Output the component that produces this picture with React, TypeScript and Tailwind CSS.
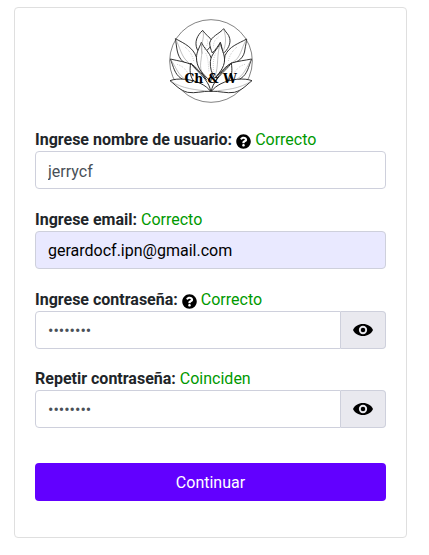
import { useState } from "react";
import type { ReactNode } from "react";
import { FaQuestionCircle } from "react-icons/fa";

const LEAVES = [
  "M125 60 C108 76 100 94 108 116 C114 126 120 132 124 134 C132 124 154 110 154 92 C146 80 134 74 125 60Z",
  "M188 55 C176 70 150 78 146 98 C146 108 150 118 154 128 C164 118 172 106 178 96 C182 106 184 116 184 132 C202 118 210 98 206 84 C204 72 194 66 188 55Z",
  "M43 85 C48 110 46 136 66 154 C74 160 82 162 90 160 C100 166 124 190 136 208 C126 192 110 170 106 140 C96 112 72 100 43 85Z",
  "M257 86 C232 100 204 108 192 136 C190 160 178 184 164 202 C180 184 196 166 212 158 C232 156 250 142 252 116 C254 104 256 96 257 86Z",
  "M121 96 C114 116 104 128 107 150 C110 176 124 188 149 214 C154 190 160 166 152 146 C146 126 130 116 121 96Z",
  "M178 97 C170 118 150 130 148 154 C147 176 152 184 160 204 C180 184 194 164 190 140 C188 124 180 114 178 97Z",
  "M28 146 C38 170 40 190 60 204 C84 222 116 226 148 243 C138 212 112 184 94 164 C74 154 52 152 28 146Z",
  "M272 146 C262 170 260 190 240 204 C216 222 184 226 152 243 C160 212 184 176 212 158 C232 152 252 150 272 146Z",
  "M89 158 C86 180 86 196 98 212 C112 228 132 232 149 243 C146 218 122 194 108 180 C100 172 94 166 89 158Z",
  "M211 158 C214 180 214 196 202 212 C188 228 168 232 151 243 C154 218 178 194 192 180 C200 172 206 166 211 158Z",
  "M27 211 C50 202 92 206 120 220 C132 226 142 234 149 243 C122 242 104 250 80 246 C56 240 44 224 27 211Z",
  "M273 211 C250 202 208 206 180 220 C168 226 158 234 151 243 C178 242 196 250 220 246 C244 240 256 224 273 211Z",
];

const VEINS = [
  "M125 62 C134 84 114 104 124 130",
  "M188 57 C196 80 196 104 184 128",
  "M121 98 C128 136 112 160 122 184",
  "M178 99 C166 134 174 166 162 198",
  "M44 87 C58 112 60 140 84 158",
  "M256 88 C240 114 240 144 214 156",
  "M29 147 C48 176 50 192 74 208",
  "M271 147 C254 176 250 192 226 208",
  "M29 212 C64 236 104 238 146 243",
  "M271 212 C236 236 196 238 154 243",
];

const SHADING = [
  "M138 88 C144 98 136 108 130 118",
  "M172 80 C162 88 156 98 158 112",
  "M72 110 C86 122 94 134 98 152",
  "M228 110 C214 122 206 134 202 152",
  "M134 128 C142 144 142 164 144 186",
  "M164 130 C156 144 156 164 158 184",
  "M48 162 C62 166 72 174 82 190",
  "M252 162 C238 166 228 174 218 190",
];

function Logo() {
  return (
    <svg viewBox="24 26 252 252" className="size-21" role="img" aria-label="Ch & W">
      <circle cx="150" cy="152" r="124" fill="none" stroke="#444" strokeWidth="2" />
      <g fill="#fff" stroke="#222" strokeWidth="2.8" strokeLinejoin="round">
        {LEAVES.map((d) => (
          <path key={d} d={d} />
        ))}
      </g>
      <g fill="none" stroke="#888" strokeWidth="1.6">
        {VEINS.map((d) => (
          <path key={d} d={d} />
        ))}
      </g>
      <g fill="none" stroke="#bbb" strokeWidth="3" strokeDasharray="2 4">
        {SHADING.map((d) => (
          <path key={d} d={d} />
        ))}
      </g>
      <text
        x="149"
        y="217"
        textAnchor="middle"
        fill="#000"
        className="font-['DejaVu_Serif',serif] text-[37px] font-bold"
      >
        Ch &amp; W
      </text>
    </svg>
  );
}

function EyeIcon() {
  return (
    <svg viewBox="0 0 20 12" className="h-3 w-5" aria-hidden="true">
      <path d="M0 6C1.6 2.4 5.4 0 10 0s8.4 2.4 10 6c-1.6 3.6-5.4 6-10 6S1.6 9.600 0 6z" fill="#000" />
      <circle cx="10" cy="6" r="3.200" fill="#000" stroke="#e9e9ef" strokeWidth="1.900" />
    </svg>
  );
}

type FieldProps = {
  id: string;
  label: string;
  status: string;
  help?: boolean;
  children: ReactNode;
};

function Field({ id, label, status, help, children }: FieldProps) {
  return (
    <div>
      <div className="flex h-6 items-center gap-1 pt-0.5">
        <label htmlFor={id} className="font-bold">
          {label}
        </label>
        {help && <FaQuestionCircle className="mt-0.5 size-[15px] text-black" aria-label="Ayuda" />}
        <span className="text-[#009900]">{status}</span>
      </div>
      {children}
    </div>
  );
}

function PasswordInput({ id }: { id: string }) {
  const [visible, setVisible] = useState(false);
  return (
    <div className="flex">
      <input
        id={id}
        type={visible ? "text" : "password"}
        defaultValue="12345678"
        className="h-[38px] min-w-0 flex-1 rounded-l border border-[#ced0dc] bg-white px-3 text-[#495057]"
      />
      <button
        type="button"
        aria-label="Mostrar contraseña"
        onClick={() => setVisible(!visible)}
        className="flex h-[38px] w-[45px] items-center justify-center rounded-r border border-l-0 border-[#ced0dc] bg-[#e9e9ef]"
      >
        <EyeIcon />
      </button>
    </div>
  );
}

export default function App() {
  return (
    <main className="bg-white py-[7px] pr-[22px] pl-3.5 font-[Roboto,sans-serif] text-base text-[#212529]">
      <form
        onSubmit={(e) => e.preventDefault()}
        className="flex flex-col rounded border border-[#dfdfdf] px-5 pt-[11px] pb-9"
      >
        <div className="mb-6 flex justify-center">
          <Logo />
        </div>
        <div className="flex flex-col gap-[18px]">
          <Field id="user" label="Ingrese nombre de usuario:" status="Correcto" help>
            <input
              id="user"
              type="text"
              defaultValue="jerrycf"
              className="h-[38px] w-full rounded border border-[#ced0dc] bg-white px-3 pt-0.5 text-[#495057]"
            />
          </Field>
          <Field id="email" label="Ingrese email:" status="Correcto">
            <input
              id="email"
              type="email"
              defaultValue="gerardocf.ipn@gmail.com"
              className="h-[38px] w-full rounded border border-[#ced0dc] bg-[#e9e9ff] px-3 text-black"
            />
          </Field>
          <div className="flex flex-col gap-[17px]">
            <Field id="password" label="Ingrese contraseña:" status="Correcto" help>
              <PasswordInput id="password" />
            </Field>
            <Field id="repeat" label="Repetir contraseña:" status="Coinciden">
              <PasswordInput id="repeat" />
            </Field>
          </div>
        </div>
        <button type="submit" className="mt-[35px] h-[38px] w-full rounded bg-[#6200ff] pt-0.5 text-white">
          Continuar
        </button>
      </form>
    </main>
  );
}
